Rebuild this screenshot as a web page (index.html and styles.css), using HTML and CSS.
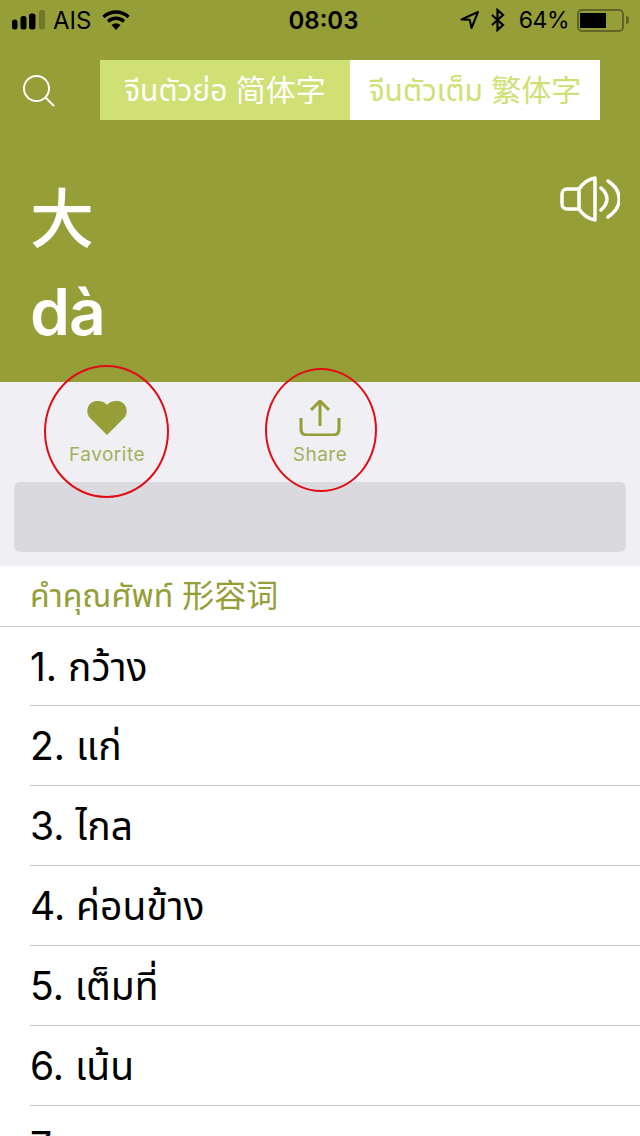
FILE: index.html
```html
<!DOCTYPE html>
<html lang="th">
<head>
    <meta charset="UTF-8">
    <meta name="viewport" content="width=device-width, initial-scale=1.0">
    <title>大 dà</title>
    <link rel="stylesheet" href="styles.css">
</head>
<body>
    <header class="hero">
        <div class="status-bar">
            <div class="status-side">
                <svg class="signal" width="34" height="20" viewBox="0 0 34 20">
                    <rect x="0" y="9.500" width="5.500" height="10" rx="2.500" fill="#000"/>
                    <rect x="8.500" y="6" width="6" height="13.500" rx="2.500" fill="#000"/>
                    <rect x="17" y="3.500" width="6.500" height="16" rx="2.500" fill="#000"/>
                    <rect x="27" y="0" width="6" height="19.500" rx="2.500" fill="#000" opacity="0.25"/>
                </svg>
                <span>AIS</span>
                <svg class="wifi" width="28" height="22" viewBox="0 0 28 22">
                    <path d="M1.500 8a18 18 0 0 1 25 0" fill="none" stroke="#000" stroke-width="3.500"/>
                    <path d="M6 12.500a11.500 11.500 0 0 1 16 0" fill="none" stroke="#000" stroke-width="3.500"/>
                    <path d="M9.500 16a7 7 0 0 1 9 0L14 21z" fill="#000"/>
                </svg>
            </div>
            <div class="status-time">08:03</div>
            <div class="status-side status-right">
                <svg width="20" height="20" viewBox="0 0 20 20">
                    <path d="M1.500 9.500L18 2l-6.500 16-1.800-8.200z" fill="none" stroke="#000" stroke-width="2" stroke-linejoin="round"/>
                </svg>
                <svg class="bluetooth" width="16" height="24" viewBox="0 0 16 24">
                    <path d="M2 7l11 10-5.500 5V2L13 7 2 17" fill="none" stroke="#000" stroke-width="2.200"/>
                </svg>
                <span class="percent">64%</span>
                <div class="battery"><div class="battery-level"></div></div>
                <div class="battery-tip"></div>
            </div>
        </div>

        <div class="toolbar">
            <svg class="search" width="34" height="34" viewBox="0 0 34 34">
                <circle cx="14.500" cy="14.500" r="12.500" fill="none" stroke="#fff" stroke-width="2"/>
                <path d="M23.500 23.500L32 32" stroke="#fff" stroke-width="2"/>
            </svg>
            <div class="tabs">
                <div class="tab tab-on">จีนตัวย่อ 简体字</div>
                <div class="tab">จีนตัวเต็ม 繁体字</div>
            </div>
        </div>

        <div class="word">
            <div>
                <div class="hanzi">大</div>
                <div class="pinyin">dà</div>
            </div>
            <svg class="speaker" width="60" height="46" viewBox="0 0 60 46">
                <path d="M19 13H7a5 5 0 0 0-5 5v10a5 5 0 0 0 5 5h12M19 13c4-6 10-10 16-11v42c-6-1-12-5-16-11z" fill="none" stroke="#fff" stroke-width="3.500" stroke-linejoin="round"/>
                <path d="M41 12c8 7 8 15 0 22M48 5c15 10 15 26 0 36" fill="none" stroke="#fff" stroke-width="3.500" stroke-linecap="round"/>
            </svg>
        </div>
    </header>

    <section class="actions">
        <div class="action-row">
            <div class="action">
                <svg width="42" height="36" viewBox="0 0 42 36">
                    <path d="M21 35L4 18C-1 13 1 2 10 1C15 .5 19 2 21 5C23 2 27 .5 32 1C41 2 43 13 38 18z" fill="#969e38"/>
                </svg>
                <span>Favorite</span>
            </div>
            <div class="action">
                <svg width="42" height="36" viewBox="0 0 42 36">
                    <path d="M21 26V2M12 10l9-9 9 9" fill="none" stroke="#969e38" stroke-width="3"/>
                    <path d="M2 18v11c0 4 2 6 6 6h26c4 0 6-2 6-6V18" fill="none" stroke="#969e38" stroke-width="3"/>
                </svg>
                <span>Share</span>
            </div>
        </div>
        <div class="banner"></div>
    </section>

    <main class="meanings">
        <h2 class="meaning-head">คำคุณศัพท์ 形容词</h2>
        <ul class="meaning-list">
            <li>1. กว้าง</li>
            <li>2. แก่</li>
            <li>3. ไกล</li>
            <li>4. ค่อนข้าง</li>
            <li>5. เต็มที่</li>
            <li>6. เน้น</li>
            <li>7. มาก</li>
        </ul>
    </main>

    <div class="mark mark-fav"></div>
    <div class="mark mark-share"></div>
</body>
</html>
```

FILE: styles.css
```css
html, body {
    margin: 0;
    height: 1136px;
    overflow: hidden;
}

body {
    position: relative;
    background: #fff;
    font-family: "Inter", "Noto Sans", "Noto Sans Thai", "Noto Sans CJK SC", sans-serif;
    color: #000;
}

.hero {
    height: 382px;
    background: #969e38;
}

.status-bar {
    height: 40px;
    padding: 0 11px 0 12px;
    display: flex;
    justify-content: space-between;
    align-items: center;
    font-size: 24px;
    position: relative;
}

.status-side {
    display: flex;
    align-items: center;
    gap: 7px;
}

.status-right {
    gap: 8px;
}

.status-time {
    position: absolute;
    left: 7px;
    right: 0;
    text-align: center;
    font-weight: 600;
}

.wifi {
    margin-left: 4px;
}

.bluetooth {
    margin-left: 2px;
}

.percent {
    margin-left: 5px;
    font-size: 23px;
    letter-spacing: -0.5px;
}

.battery {
    width: 47px;
    height: 23px;
    border: 2px solid #5f6524;
    border-radius: 5px;
    padding: 2px 1px;
    box-sizing: border-box;
}

.battery-level {
    width: 26px;
    height: 15px;
    background: #000;
}

.battery-tip {
    width: 3px;
    height: 8px;
    margin-left: -6px;
    background: #5f6524;
    border-radius: 0 3px 3px 0;
}

.toolbar {
    height: 60px;
    margin-top: 20px;
    padding: 0 40px 0 22px;
    display: flex;
    justify-content: space-between;
    align-items: center;
}

.search {
    margin-top: 2px;
}

.tabs {
    display: flex;
}

.tab {
    width: 250px;
    height: 60px;
    background: #fff;
    color: #d0e074;
    font-size: 30px;
    line-height: 60px;
    text-align: center;
    white-space: nowrap;
}

.tab-on {
    background: #d0e074;
    color: #fff;
}

.word {
    display: flex;
    justify-content: space-between;
    padding: 46px 20px 0 30px;
    color: #fff;
}

.hanzi {
    font-size: 64px;
    line-height: 96px;
    font-weight: 500;
    font-family: "Noto Sans CJK SC", sans-serif;
}

.pinyin {
    font-size: 64px;
    line-height: 100px;
    font-weight: 600;
    letter-spacing: -1px;
}

.speaker {
    margin-top: 10px;
}

.actions {
    padding-bottom: 14px;
    background: #efeff4;
}

.action-row {
    height: 100px;
    box-sizing: border-box;
    padding: 18px 0 0 47px;
    display: flex;
    gap: 93px;
}

.action {
    width: 120px;
    display: flex;
    flex-direction: column;
    align-items: center;
    gap: 7px;
    font-size: 19px;
    color: #a5b05c;
}

.action span {
    line-height: 24px;
    letter-spacing: 0.5px;
}

.banner {
    height: 70px;
    margin: 0 14px;
    background: #dadade;
    border-radius: 6px;
}

.meaning-head {
    margin: 0;
    height: 60px;
    padding-left: 30px;
    font-size: 32px;
    line-height: 60px;
    font-weight: 400;
    color: #969e38;
    border-bottom: 1px solid #c8c8c8;
}

.meaning-list {
    list-style: none;
    margin: 0;
    padding: 0 0 0 30px;
}

.meaning-list li {
    height: 79px;
    font-size: 39px;
    line-height: 80px;
    border-bottom: 1px solid #c8c8c8;
}

.meaning-list li:first-child {
    height: 78px;
}

.mark {
    position: absolute;
    box-sizing: border-box;
    border: 2px solid #e00d14;
    border-radius: 50%;
}

.mark-fav {
    left: 44px;
    top: 365px;
    width: 125px;
    height: 133px;
}

.mark-share {
    left: 265px;
    top: 368px;
    width: 112px;
    height: 124px;
}
```
